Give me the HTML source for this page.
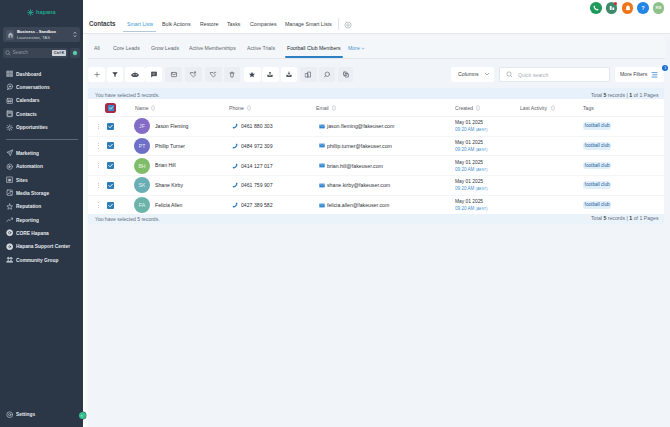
<!DOCTYPE html><html><head><meta charset="utf-8"><style>
*{box-sizing:border-box;margin:0;padding:0}
html,body{width:670px;height:427px;overflow:hidden;background:#f1f5fa;font-family:"Liberation Sans",sans-serif;position:relative}
.a{position:absolute;white-space:nowrap}
.t{position:absolute;white-space:nowrap;font-size:5.2px;line-height:6px;color:#3b3f44;transform:scaleX(0.85);transform-origin:0 50%}
.nav{position:absolute;left:16.2px;color:#e6e9ee;font-size:5.5px;font-weight:bold;white-space:nowrap;line-height:6px;transform:scaleX(0.88);transform-origin:0 0}
.ni{position:absolute;left:5.5px}
.btn{position:absolute;top:66.8px;height:14.8px;border-radius:2.5px;background:#fff;box-shadow:0 0 1px rgba(0,0,0,0.03)}
.btn.g{background:#ebeff3}
.btn svg{position:absolute;left:50%;top:50%;transform:translate(-50%,-42%)}
.cb{position:absolute;width:7px;height:7px;border-radius:1px;background:#2c7db6}
.cb svg{position:absolute;left:0;top:0}
.av{position:absolute;width:16px;height:16px;border-radius:50%;color:#fff;font-size:5.2px;text-align:center;line-height:16.4px;color:rgba(255,255,255,0.85)}
.pill{position:absolute;left:583.3px;width:27.6px;height:7.7px;border-radius:3px;background:#e1effb;color:#235c98;font-size:4.7px;line-height:7.7px;text-align:center}
</style></head><body>
<div class="a" style="left:0;top:0;width:83px;height:427px;background:#2b3646"></div>
<svg class="a" style="left:27.4px;top:9.3px" width="7" height="7" viewBox="0 0 7 7"><g stroke="#1fa68c" stroke-width="0.8" stroke-linecap="round"><line x1="3.5" y1="0.6" x2="3.5" y2="6.4"/><line x1="0.6" y1="3.5" x2="6.4" y2="3.5"/><line x1="1.4" y1="1.4" x2="5.6" y2="5.6"/><line x1="5.6" y1="1.4" x2="1.4" y2="5.6"/></g></svg>
<div class="a" style="left:36px;top:9.2px;font-size:5.6px;line-height:7px;color:#1fa68c;font-weight:bold">hapana</div>
<div class="a" style="left:2.8px;top:27px;width:77.4px;height:15px;background:#3c4656;border-radius:2.5px"></div>
<div class="a" style="left:6.2px;top:29.7px;width:8px;height:10.8px;background:#4a5464;border-radius:1.5px"></div>
<svg class="a" style="left:7.6px;top:31.6px" width="5.2" height="6" viewBox="0 0 5.2 6"><path d="M0.4 5.8 V2.2 L2.6 0.4 L4.8 2.2 V5.8 Z" fill="#a9b0ba"/><rect x="1.9" y="3.6" width="1.4" height="2.2" fill="#4a5464"/></svg>
<div class="a" style="left:16.9px;top:28.9px;font-size:4.1px;line-height:6px;color:#fff;font-weight:bold">Business - Sandbox</div>
<div class="a" style="left:16.9px;top:35.1px;font-size:4.4px;line-height:6px;color:#c3c9d1">Launceston, TAS</div>
<svg class="a" style="left:72.8px;top:30.6px" width="4" height="7" viewBox="0 0 4 7"><path d="M0.8 2.6 L2 1.2 L3.2 2.6 M0.8 4.4 L2 5.8 L3.2 4.4" fill="none" stroke="#c8ced6" stroke-width="0.8"/></svg>
<div class="a" style="left:2.8px;top:47.7px;width:64.9px;height:10.6px;background:#3a4453;border-radius:2px"></div>
<svg class="a" style="left:5.4px;top:50px" width="6" height="6" viewBox="0 0 6 6"><circle cx="2.5" cy="2.5" r="1.8" fill="none" stroke="#8d96a2" stroke-width="0.7"/><line x1="3.8" y1="3.8" x2="5.3" y2="5.3" stroke="#8d96a2" stroke-width="0.7"/></svg>
<div class="a" style="left:12.5px;top:49.8px;font-size:4.9px;line-height:6px;color:#8d96a2">Search</div>
<div class="a" style="left:52.3px;top:50.4px;width:13.6px;height:5.4px;background:#cfd4da;border-radius:0.8px"></div>
<div class="a" style="left:52.3px;top:50.4px;width:13.6px;height:5.4px;font-size:4px;line-height:5.6px;color:#2b3646;text-align:center;font-weight:bold;letter-spacing:-0.05px">Ctrl K</div>
<div class="a" style="left:69.5px;top:47.7px;width:10.7px;height:10.6px;background:#3a4453;border-radius:2px"></div>
<div class="a" style="left:72.9px;top:50.5px;width:4.6px;height:4.6px;border-radius:50%;background:#5fcdb0;box-shadow:0 0 1.5px #3aa88a"></div>
<div class="nav" style="top:70.6px">Dashboard</div>
<svg class="a" style="left:5.6px;top:70.0px" width="7.4" height="7.4" viewBox="0 0 7.4 7.4"><g fill="none" stroke="#b9c0c9" stroke-width="0.7" stroke-linecap="round" stroke-linejoin="round"><rect x="0.8" y="1" width="6" height="5.6" fill="#8e97a3" stroke="#8e97a3"/><path d="M3.8 1.6 V6 M1.4 3.6 H6.2" stroke="#5d6673" stroke-width="0.5"/></g></svg>
<div class="nav" style="top:84.0px">Conversations</div>
<svg class="a" style="left:5.6px;top:83.4px" width="7.4" height="7.4" viewBox="0 0 7.4 7.4"><g fill="none" stroke="#b9c0c9" stroke-width="0.7" stroke-linecap="round" stroke-linejoin="round"><circle cx="4" cy="3.5" r="2.6"/><path d="M2.2 5.4 L1 6.6 L2.8 6"/><circle cx="4" cy="3.5" r="0.7" fill="#b9c0c9"/></g></svg>
<div class="nav" style="top:97.4px">Calendars</div>
<svg class="a" style="left:5.6px;top:96.8px" width="7.4" height="7.4" viewBox="0 0 7.4 7.4"><g fill="none" stroke="#b9c0c9" stroke-width="0.7" stroke-linecap="round" stroke-linejoin="round"><rect x="1" y="1.4" width="5.4" height="5.2" rx="0.6"/><path d="M1 3 H6.4"/><rect x="2.2" y="4" width="1" height="1" fill="#b9c0c9"/><rect x="4.2" y="4" width="1" height="1" fill="#b9c0c9"/></g></svg>
<div class="nav" style="top:110.8px">Contacts</div>
<svg class="a" style="left:5.6px;top:110.2px" width="7.4" height="7.4" viewBox="0 0 7.4 7.4"><g fill="none" stroke="#b9c0c9" stroke-width="0.7" stroke-linecap="round" stroke-linejoin="round"><rect x="1" y="0.9" width="5.4" height="5.8" rx="0.6" fill="#7d8692"/><rect x="2.2" y="4" width="3" height="1.6" fill="#2b3646" stroke="none"/></g></svg>
<div class="nav" style="top:124.2px">Opportunities</div>
<svg class="a" style="left:5.6px;top:123.6px" width="7.4" height="7.4" viewBox="0 0 7.4 7.4"><g fill="none" stroke="#b9c0c9" stroke-width="0.7" stroke-linecap="round" stroke-linejoin="round"><path d="M3.7 0.8 V2.6 M3.7 4.8 V6.6 M0.8 3.7 H2.6 M4.8 3.7 H6.6 M1.6 1.6 L2.6 2.6 M5.8 1.6 L4.8 2.6 M1.6 5.8 L2.6 4.8 M5.8 5.8 L4.8 4.8"/></g></svg>
<div class="nav" style="top:149.7px">Marketing</div>
<svg class="a" style="left:5.6px;top:149.1px" width="7.4" height="7.4" viewBox="0 0 7.4 7.4"><g fill="none" stroke="#b9c0c9" stroke-width="0.7" stroke-linecap="round" stroke-linejoin="round"><path d="M6.4 1 L0.9 3.3 L3.2 4.2 L4.1 6.5 Z M3.2 4.2 L6.4 1"/></g></svg>
<div class="nav" style="top:163.1px">Automation</div>
<svg class="a" style="left:5.6px;top:162.5px" width="7.4" height="7.4" viewBox="0 0 7.4 7.4"><g fill="none" stroke="#b9c0c9" stroke-width="0.7" stroke-linecap="round" stroke-linejoin="round"><circle cx="3.7" cy="3.7" r="2.7"/><path d="M3.2 2.7 L4.6 3.7 L3.2 4.7 Z" fill="#b9c0c9"/></g></svg>
<div class="nav" style="top:176.5px">Sites</div>
<svg class="a" style="left:5.6px;top:175.9px" width="7.4" height="7.4" viewBox="0 0 7.4 7.4"><g fill="none" stroke="#b9c0c9" stroke-width="0.7" stroke-linecap="round" stroke-linejoin="round"><rect x="1" y="1" width="5.4" height="5.4"/><rect x="2.6" y="3.2" width="2.2" height="1.8" fill="#b9c0c9"/></g></svg>
<div class="nav" style="top:189.9px">Media Storage</div>
<svg class="a" style="left:5.6px;top:189.3px" width="7.4" height="7.4" viewBox="0 0 7.4 7.4"><g fill="none" stroke="#b9c0c9" stroke-width="0.7" stroke-linecap="round" stroke-linejoin="round"><rect x="1" y="1" width="5.4" height="5.4" rx="0.8"/><path d="M1.4 5.6 L3.2 3.8 L6 6.2"/><circle cx="4.7" cy="2.6" r="0.6"/></g></svg>
<div class="nav" style="top:203.3px">Reputation</div>
<svg class="a" style="left:5.6px;top:202.7px" width="7.4" height="7.4" viewBox="0 0 7.4 7.4"><g fill="none" stroke="#b9c0c9" stroke-width="0.7" stroke-linecap="round" stroke-linejoin="round"><path d="M3.7 0.9 L4.5 2.8 L6.5 2.9 L5 4.2 L5.5 6.3 L3.7 5.2 L1.9 6.3 L2.4 4.2 L0.9 2.9 L2.9 2.8 Z"/></g></svg>
<div class="nav" style="top:216.7px">Reporting</div>
<svg class="a" style="left:5.6px;top:216.1px" width="7.4" height="7.4" viewBox="0 0 7.4 7.4"><g fill="none" stroke="#b9c0c9" stroke-width="0.7" stroke-linecap="round" stroke-linejoin="round"><path d="M0.8 5.6 L2.6 3.6 L4 4.6 L6.6 2 M5.2 2 H6.6 V3.4"/></g></svg>
<div class="nav" style="top:230.0px">CORE Hapana</div>
<svg class="a" style="left:5.6px;top:229.4px" width="7.4" height="7.4" viewBox="0 0 7.4 7.4"><g fill="none" stroke="#b9c0c9" stroke-width="0.7" stroke-linecap="round" stroke-linejoin="round"><circle cx="3.7" cy="3.7" r="3" fill="#d7dce2" stroke="#d7dce2"/><circle cx="3.7" cy="3.7" r="1.2" stroke="#2b3646" stroke-width="0.6"/></g></svg>
<div class="nav" style="top:243.3px">Hapana Support Center</div>
<svg class="a" style="left:5.6px;top:242.7px" width="7.4" height="7.4" viewBox="0 0 7.4 7.4"><g fill="none" stroke="#b9c0c9" stroke-width="0.7" stroke-linecap="round" stroke-linejoin="round"><circle cx="3.7" cy="3.7" r="3" fill="#d7dce2" stroke="#d7dce2"/><circle cx="3.7" cy="3.7" r="1" stroke="#2b3646" stroke-width="0.6"/></g></svg>
<div class="nav" style="top:256.7px">Community Group</div>
<svg class="a" style="left:5.6px;top:256.1px" width="7.4" height="7.4" viewBox="0 0 7.4 7.4"><g fill="none" stroke="#b9c0c9" stroke-width="0.7" stroke-linecap="round" stroke-linejoin="round"><circle cx="2.3" cy="2.3" r="1" fill="#b9c0c9"/><circle cx="5.1" cy="2.3" r="1" fill="#b9c0c9"/><path d="M0.7 6 C0.8 4 3.7 4 3.7 6 C3.7 4 6.6 4 6.7 6 Z" fill="#b9c0c9"/></g></svg>
<div class="nav" style="top:411.1px">Settings</div>
<svg class="a" style="left:5.6px;top:410.5px" width="7.4" height="7.4" viewBox="0 0 7.4 7.4"><g fill="none" stroke="#b9c0c9" stroke-width="0.7" stroke-linecap="round" stroke-linejoin="round"><circle cx="3.7" cy="3.7" r="2.9"/><circle cx="3.7" cy="3.7" r="1.1"/></g></svg>
<div class="a" style="left:5.6px;top:139.1px;width:72.3px;height:1.2px;background:#5d6775"></div>
<div class="a" style="z-index:5;left:78.8px;top:411.9px;width:7.2px;height:7.2px;border-radius:50%;background:#34c08c;box-shadow:0 0 0 0.4px #2b3646"></div>
<svg class="a" style="z-index:6;left:80.4px;top:413.5px" width="4" height="4" viewBox="0 0 4 4"><path d="M2.5 0.9 L1.4 2 L2.5 3.1" fill="none" stroke="#e9fff5" stroke-width="0.6"/></svg>
<div class="a" style="left:83px;top:0;width:5px;height:427px;background:linear-gradient(90deg,#fdfefe 0,#fbfdfd 1.5px,#f3f7f8 5px)"></div>
<div class="a" style="left:83px;top:0;width:587px;height:33.8px;background:#fff;border-bottom:0.9px solid #e3e7eb"></div>
<div class="a" style="left:89.3px;top:20px;font-size:7.2px;line-height:8px;font-weight:bold;color:#3a3e44;transform:scaleX(0.86);transform-origin:0 0">Contacts</div>
<div class="t" style="left:126.5px;top:21px;font-size:6.18px;color:#3b9bd6">Smart Lists</div>
<div class="t" style="left:162.2px;top:21px;font-size:6.18px;color:#3b3f44">Bulk Actions</div>
<div class="t" style="left:200px;top:21px;font-size:6.18px;color:#3b3f44">Restore</div>
<div class="t" style="left:227.3px;top:21px;font-size:6.18px;color:#3b3f44">Tasks</div>
<div class="t" style="left:250px;top:21px;font-size:6.18px;color:#3b3f44">Companies</div>
<div class="t" style="left:285.3px;top:21px;font-size:6.18px;color:#3b3f44">Manage Smart Lists</div>
<div class="a" style="left:123.3px;top:30.7px;width:32.7px;height:1px;background:#b3c7d4"></div>
<div class="a" style="left:337.8px;top:18.3px;width:0.7px;height:11.7px;background:#e2e4e7"></div>
<svg class="a" style="left:343.7px;top:20.5px" width="8" height="8" viewBox="0 0 8 8"><path d="M4 0.8 L4.7 1.5 L5.8 1.3 L6.1 2.3 L7.1 2.8 L6.8 3.8 L7.2 4.8 L6.3 5.4 L6.1 6.5 L5 6.5 L4.2 7.2 L3.3 6.6 L2.2 6.8 L1.8 5.8 L0.9 5.2 L1.2 4.2 L0.8 3.2 L1.7 2.6 L1.9 1.5 L3 1.5 Z" fill="none" stroke="#9aa0a6" stroke-width="0.6" stroke-linejoin="round"/><circle cx="4" cy="4" r="1.2" fill="none" stroke="#9aa0a6" stroke-width="0.6"/></svg>
<div class="a" style="left:590.05px;top:2.4px;width:11.5px;height:11.5px;border-radius:50%;background:#1f9a5c"></div>
<div class="a" style="left:605.95px;top:2.4px;width:11.5px;height:11.5px;border-radius:50%;background:#3e8a6c"></div>
<div class="a" style="left:621.75px;top:2.4px;width:11.5px;height:11.5px;border-radius:50%;background:#ee7618"></div>
<div class="a" style="left:637.25px;top:2.4px;width:11.5px;height:11.5px;border-radius:50%;background:#2385e4"></div>
<div class="a" style="left:652.85px;top:2.4px;width:11.5px;height:11.5px;border-radius:50%;background:#8ec089"></div>
<div class="a" style="left:614px;top:2.3px;width:3.2px;height:3.2px;border-radius:50%;background:#d9262c"></div>
<div class="a" style="left:653.6px;top:5.3px;width:10px;font-size:4.3px;line-height:6px;color:#eef6ec;text-align:center;font-weight:bold">RE</div>
<div class="a" style="left:638px;top:5.2px;width:10px;font-size:5px;line-height:6px;color:#fff;text-align:center;font-weight:bold">?</div>
<svg class="a" style="left:592.8px;top:5.2px" width="6" height="6" viewBox="0 0 6 6"><path d="M4.6 0.5 L5.5 1.2 C5.4 3.6 3.6 5.4 1.2 5.5 L0.5 4.6 L1.6 3.8 L2.3 4.2 C3.1 3.7 3.7 3.1 4.2 2.3 L3.8 1.6 Z" fill="#fff" transform="rotate(90 3 3)"/></svg>
<svg class="a" style="left:608.9px;top:5.4px" width="6" height="6" viewBox="0 0 6 6"><path d="M0.8 1 H2.6 V5 H0.8 Z M3.4 2.4 H5.2 V5 H3.4 Z" fill="#fff"/></svg>
<svg class="a" style="left:624.5px;top:4.9px" width="6" height="6.5" viewBox="0 0 6 6.5"><path d="M3 0.6 C4.4 0.6 4.8 1.8 4.8 3 V4.3 L5.5 5 H0.5 L1.2 4.3 V3 C1.2 1.8 1.6 0.6 3 0.6 Z M2.3 5.5 H3.7 C3.6 6.1 2.4 6.1 2.3 5.5 Z" fill="#fff"/></svg>
<div class="a" style="left:87.6px;top:35.8px;width:577px;height:23.4px;background:#f4f7fa;border-bottom:0.7px solid #e3e8ee"></div>
<div class="t" style="left:93.9px;top:45.1px;font-size:6.12px;color:#62686f">All</div>
<div class="t" style="left:113px;top:45.1px;font-size:6.12px;color:#62686f">Core Leads</div>
<div class="t" style="left:150.7px;top:45.1px;font-size:6.12px;color:#62686f">Grow Leads</div>
<div class="t" style="left:188.8px;top:45.1px;font-size:6.12px;color:#62686f">Active Memberships</div>
<div class="t" style="left:247px;top:45.1px;font-size:6.12px;color:#62686f">Active Trials</div>
<div class="t" style="left:286.5px;top:45.1px;font-size:6.12px;color:#25292e">Football Club Members</div>
<div class="t" style="left:348px;top:45.1px;font-size:6.12px;color:#4b93cc">More</div><svg class="a" style="left:360.6px;top:46.6px" width="4" height="3" viewBox="0 0 4 3"><path d="M0.6 0.8 L2 2.2 L3.4 0.8" fill="none" stroke="#4b93cc" stroke-width="0.6"/></svg>
<div class="a" style="left:284.7px;top:56.4px;width:58px;height:1.9px;background:#2f7fc5;border-radius:1px"></div>
<div class="btn" style="left:88px;width:17.3px"><svg width="7" height="7" viewBox="0 0 7 7"><path d="M3.5 0.8 V6.2 M0.8 3.5 H6.2" stroke="#40454c" stroke-width="0.55"/></svg></div>
<div class="btn" style="left:106.7px;width:16.3px"><svg width="7" height="7" viewBox="0 0 7 7"><path d="M0.8 1.2 H6.2 L4.1 3.8 V6 L2.9 5.4 V3.8 Z" fill="#3d4249"/></svg></div>
<div class="btn" style="left:125px;width:19.7px"><svg width="8" height="7" viewBox="0 0 8 7"><rect x="1" y="2" width="6" height="4" rx="1.5" fill="#4a5058"/><rect x="2.3" y="3.2" width="1" height="1" fill="#fff"/><rect x="4.7" y="3.2" width="1" height="1" fill="#fff"/><line x1="4" y1="0.6" x2="4" y2="2" stroke="#4a5058" stroke-width="0.6"/><rect x="0.2" y="3.2" width="0.8" height="1.6" fill="#4a5058"/><rect x="7" y="3.2" width="0.8" height="1.6" fill="#4a5058"/></svg></div>
<div class="btn" style="left:145.4px;width:17px"><svg width="7" height="7" viewBox="0 0 7 7"><path d="M1 0.9 H6 V4.7 H2.3 L1 5.9 Z" fill="#3d4249" stroke="#3d4249" stroke-width="0.6" stroke-linejoin="round"/><line x1="2" y1="2.1" x2="5" y2="2.1" stroke="#fff" stroke-width="0.45"/><line x1="2" y1="3.3" x2="4.2" y2="3.3" stroke="#fff" stroke-width="0.45"/></svg></div>
<div class="btn g" style="left:165px;width:17px"><svg width="7" height="7" viewBox="0 0 7 7"><g fill="none" stroke="#5f656d" stroke-width="0.75" stroke-linecap="round" stroke-linejoin="round"><rect x="0.9" y="1.4" width="5.2" height="4.2" rx="0.7"/><path d="M1.2 2.4 L3.5 3.8 L5.8 2.4"/></g></svg></div>
<div class="btn g" style="left:184.8px;width:17px"><svg width="7" height="7" viewBox="0 0 7 7"><g fill="none" stroke="#666c74" stroke-width="0.7" stroke-linecap="round" stroke-linejoin="round"><path d="M1 1.5 L3.5 1.5 L6 4 L4 6 L1.5 3.5 Z"/><line x1="5.6" y1="0.4" x2="5.6" y2="2.2"/><line x1="4.7" y1="1.3" x2="6.5" y2="1.3"/></g></svg></div>
<div class="btn g" style="left:204.5px;width:17px"><svg width="7" height="7" viewBox="0 0 7 7"><g fill="none" stroke="#666c74" stroke-width="0.7" stroke-linecap="round" stroke-linejoin="round"><path d="M1 1.5 L3.5 1.5 L6 4 L4 6 L1.5 3.5 Z"/><line x1="4.7" y1="1.3" x2="6.5" y2="1.3"/></g></svg></div>
<div class="btn g" style="left:224.2px;width:16.2px"><svg width="7" height="7" viewBox="0 0 7 7"><g fill="none" stroke="#666c74" stroke-width="0.7" stroke-linecap="round" stroke-linejoin="round"><path d="M1.5 2 H5.5 M2.8 2 V1 H4.2 V2 M2 2 L2.4 6 H4.6 L5 2"/></g></svg></div>
<div class="btn" style="left:243.7px;width:17.5px"><svg width="7" height="7" viewBox="0 0 7 7"><path d="M3.5 0.6 L4.4 2.6 L6.5 2.8 L4.9 4.2 L5.4 6.3 L3.5 5.2 L1.6 6.3 L2.1 4.2 L0.5 2.8 L2.6 2.6 Z" fill="#3a4656"/></svg></div>
<div class="btn" style="left:262.2px;width:16.5px"><svg width="7" height="7" viewBox="0 0 7 7"><path d="M0.8 3.6 H2 C2.2 4.6 4.8 4.6 5 3.6 H6.2 V5 C6.2 5.6 5.8 6 5.2 6 H1.8 C1.2 6 0.8 5.6 0.8 5 Z" fill="#50565e"/><path d="M3.5 3.8 V1.2" stroke="#50565e" stroke-width="0.9"/><path d="M2.1 2.3 L3.5 0.6 L4.9 2.3 Z" fill="#50565e"/></svg></div>
<div class="btn" style="left:280.6px;width:16.4px"><svg width="7" height="7" viewBox="0 0 7 7"><path d="M0.8 3.6 H2 C2.2 4.6 4.8 4.6 5 3.6 H6.2 V5 C6.2 5.6 5.8 6 5.2 6 H1.8 C1.2 6 0.8 5.6 0.8 5 Z" fill="#50565e"/><path d="M3.5 0.6 V2.6" stroke="#50565e" stroke-width="0.9"/><path d="M2.1 2.2 L3.5 3.9 L4.9 2.2 Z" fill="#50565e"/></svg></div>
<div class="btn g" style="left:300px;width:16.5px"><svg width="7" height="7" viewBox="0 0 7 7"><g fill="none" stroke="#666c74" stroke-width="0.7" stroke-linecap="round" stroke-linejoin="round"><rect x="1" y="2.5" width="2.5" height="3.5"/><rect x="3.5" y="1" width="2.5" height="5"/></g></svg></div>
<div class="btn g" style="left:318.5px;width:16.5px"><svg width="7" height="7" viewBox="0 0 7 7"><g fill="none" stroke="#666c74" stroke-width="0.7" stroke-linecap="round" stroke-linejoin="round"><circle cx="3.8" cy="3.2" r="2.2"/><path d="M2.2 4.7 L1 6"/></g></svg></div>
<div class="btn g" style="left:338px;width:15.4px"><svg width="7" height="7" viewBox="0 0 7 7"><g fill="none" stroke="#5a6068" stroke-width="0.7" stroke-linecap="round" stroke-linejoin="round"><rect x="1" y="1" width="3.5" height="3.5" rx="0.6"/><rect x="2.5" y="2.5" width="3.5" height="3.5" rx="0.6"/></g></svg></div>
<div class="btn" style="left:450.8px;width:43px"></div>
<div class="t" style="left:457.9px;top:71.3px;font-size:6.12px;color:#3b3f44">Columns</div>
<svg class="a" style="left:483.6px;top:72px" width="6" height="4" viewBox="0 0 6 4"><path d="M1 1 L3 3 L5 1" fill="none" stroke="#6b7178" stroke-width="0.6"/></svg>
<div class="a" style="left:499.3px;top:67.2px;width:110.4px;height:14.7px;background:#fff;border:0.7px solid #e3e8ee;border-radius:2px"></div>
<svg class="a" style="left:506.2px;top:70.8px" width="7" height="7" viewBox="0 0 7 7"><circle cx="3" cy="3" r="2.1" fill="none" stroke="#8d949b" stroke-width="0.6"/><line x1="4.5" y1="4.5" x2="6" y2="6" stroke="#8d949b" stroke-width="0.7"/></svg>
<div class="t" style="left:518px;top:71.5px;font-size:6.12px;color:#a8aeb5">Quick search</div>
<div class="btn" style="left:614.6px;width:49.2px"></div>
<div class="t" style="left:620px;top:71.3px;font-size:6.12px;color:#3b3f44">More Filters</div>
<svg class="a" style="left:651px;top:71.5px" width="7" height="6" viewBox="0 0 7 6"><g stroke="#2e7fc4" stroke-width="0.75"><line x1="0.6" y1="0.6" x2="6.4" y2="0.6"/><line x1="1.4" y1="2.8" x2="6.4" y2="2.8"/><line x1="0.6" y1="5" x2="6.4" y2="5"/></g></svg>
<div class="a" style="left:662.2px;top:65.4px;width:6px;height:6px;border-radius:50%;background:#1c6fd1;color:#fff;font-size:3.6px;line-height:6px;text-align:center">1</div>
<div class="a" style="left:88px;top:88.3px;width:576px;height:135.6px;background:#fff"></div>
<div class="a" style="left:88px;top:88.3px;width:576px;height:11.2px;background:#e7f1fb"></div>
<div class="t" style="left:95.2px;top:92.3px;font-size:5.91px;color:#5f6f80">You have selected 5 records.</div>
<div class="t" style="left:591px;top:92.2px;font-size:6.12px;color:#5f6f80">Total <b style="color:#444">5</b> records | <b style="color:#333">1</b> of 1 Pages</div>
<div class="a" style="left:88px;top:214px;width:576px;height:10px;background:#eaf2fa"></div>
<div class="t" style="left:95.2px;top:215.5px;font-size:5.91px;color:#5f6f80">You have selected 5 records.</div>
<div class="t" style="left:591px;top:215.3px;font-size:6.12px;color:#5f6f80">Total <b style="color:#444">5</b> records | <b style="color:#333">1</b> of 1 Pages</div>
<div class="a" style="left:105.3px;top:103px;width:10.8px;height:10.3px;border-radius:2.8px;background:#a72c46"></div>
<div class="cb" style="left:107.7px;top:105.2px;width:6px;height:6px;background:#3a8cc8"><svg width="6" height="6" viewBox="0 0 6 6"><path d="M1.5 3.1 L2.6 4.1 L4.6 2" fill="none" stroke="#fff" stroke-width="0.8" stroke-linecap="round"/></svg></div>
<div class="t" style="left:134.7px;top:105px;font-size:6.00px;color:#5b6066">Name</div>
<svg class="a" style="left:150.8px;top:105.3px" width="4" height="6" viewBox="0 0 4 6"><rect x="0.6" y="0.6" width="2.8" height="4.8" rx="1.4" fill="none" stroke="#b8bdc3" stroke-width="0.5"/><path d="M1.3 2.4 L2 1.6 L2.7 2.4 M1.3 3.6 L2 4.4 L2.7 3.6" fill="none" stroke="#b8bdc3" stroke-width="0.4"/></svg>
<div class="t" style="left:229.3px;top:105px;font-size:6.00px;color:#5b6066">Phone</div>
<svg class="a" style="left:246.5px;top:105.3px" width="4" height="6" viewBox="0 0 4 6"><rect x="0.6" y="0.6" width="2.8" height="4.8" rx="1.4" fill="none" stroke="#b8bdc3" stroke-width="0.5"/><path d="M1.3 2.4 L2 1.6 L2.7 2.4 M1.3 3.6 L2 4.4 L2.7 3.6" fill="none" stroke="#b8bdc3" stroke-width="0.4"/></svg>
<div class="t" style="left:315.9px;top:105px;font-size:6.00px;color:#5b6066">Email</div>
<svg class="a" style="left:331.5px;top:105.3px" width="4" height="6" viewBox="0 0 4 6"><rect x="0.6" y="0.6" width="2.8" height="4.8" rx="1.4" fill="none" stroke="#b8bdc3" stroke-width="0.5"/><path d="M1.3 2.4 L2 1.6 L2.7 2.4 M1.3 3.6 L2 4.4 L2.7 3.6" fill="none" stroke="#b8bdc3" stroke-width="0.4"/></svg>
<div class="t" style="left:454.5px;top:105px;font-size:6.00px;color:#5b6066">Created</div>
<svg class="a" style="left:475.5px;top:105.3px" width="4" height="6" viewBox="0 0 4 6"><rect x="0.6" y="0.6" width="2.8" height="4.8" rx="1.4" fill="none" stroke="#b8bdc3" stroke-width="0.5"/><path d="M1.3 2.4 L2 1.6 L2.7 2.4 M1.3 3.6 L2 4.4 L2.7 3.6" fill="none" stroke="#b8bdc3" stroke-width="0.4"/></svg>
<div class="t" style="left:519.9px;top:105px;font-size:6.00px;color:#5b6066">Last Activity</div>
<svg class="a" style="left:551px;top:105.3px" width="4" height="6" viewBox="0 0 4 6"><rect x="0.6" y="0.6" width="2.8" height="4.8" rx="1.4" fill="none" stroke="#b8bdc3" stroke-width="0.5"/><path d="M1.3 2.4 L2 1.6 L2.7 2.4 M1.3 3.6 L2 4.4 L2.7 3.6" fill="none" stroke="#b8bdc3" stroke-width="0.4"/></svg>
<div class="t" style="left:582.5px;top:105px;font-size:6.00px;color:#5b6066">Tags</div>
<div class="a" style="left:88px;top:115.8px;width:576px;height:0.5px;background:#f1f3f6"></div>
<div class="a" style="left:97.7px;top:123.50px;width:1px;height:1px;background:#b4b9bf;border-radius:50%"></div>
<div class="a" style="left:97.7px;top:125.70px;width:1px;height:1px;background:#b4b9bf;border-radius:50%"></div>
<div class="a" style="left:97.7px;top:127.90px;width:1px;height:1px;background:#b4b9bf;border-radius:50%"></div>
<div class="cb" style="left:107.2px;top:122.70px"><svg width="7" height="7" viewBox="0 0 7 7"><path d="M1.8 3.6 L3 4.8 L5.3 2.3" fill="none" stroke="#fff" stroke-width="0.9" stroke-linecap="round"/></svg></div>
<div class="av" style="left:134px;top:118.20px;background:#846cc6">JF</div>
<div class="t" style="left:154.9px;top:122.80px;font-size:6.06px;color:#2a2e33">Jason Fleming</div>
<svg class="a" style="left:232.3px;top:123.20px" width="6" height="6" viewBox="0 0 6 6"><path d="M4.6 0.5 L5.5 1.2 C5.4 3.6 3.6 5.4 1.2 5.5 L0.5 4.6 L1.6 3.8 L2.3 4.2 C3.1 3.7 3.7 3.1 4.2 2.3 L3.8 1.6 Z" fill="#2b7cc3"/></svg>
<div class="t" style="left:240.6px;top:123.20px;font-size:6.09px;color:#2f3338">0461 880 303</div>
<svg class="a" style="left:318.6px;top:123.70px" width="6" height="5" viewBox="0 0 6 5"><rect x="0.3" y="0.6" width="5.4" height="3.8" fill="#2f86d0"/><path d="M0.5 0.9 L3 2.6 L5.5 0.9" fill="none" stroke="#cfe3f5" stroke-width="0.4"/></svg>
<div class="t" style="left:326.8px;top:123.20px;font-size:6.16px;color:#2f3338">jason.fleming@fakeuser.com</div>
<div class="t" style="left:454.5px;top:119.10px;font-size:5.71px;color:#2f3338">May 01 2025</div>
<div class="t" style="left:455.4px;top:126.10px;font-size:5.41px;color:#3f8fd0">09:20 AM <span style="font-size:4.2px">(AEST)</span></div>
<div class="pill" style="top:122.35px">football club</div>
<div class="a" style="left:88px;top:135.75px;width:576px;height:0.6px;background:#f3f5f7"></div>
<div class="a" style="left:97.7px;top:143.20px;width:1px;height:1px;background:#b4b9bf;border-radius:50%"></div>
<div class="a" style="left:97.7px;top:145.40px;width:1px;height:1px;background:#b4b9bf;border-radius:50%"></div>
<div class="a" style="left:97.7px;top:147.60px;width:1px;height:1px;background:#b4b9bf;border-radius:50%"></div>
<div class="cb" style="left:107.2px;top:142.40px"><svg width="7" height="7" viewBox="0 0 7 7"><path d="M1.8 3.6 L3 4.8 L5.3 2.3" fill="none" stroke="#fff" stroke-width="0.9" stroke-linecap="round"/></svg></div>
<div class="av" style="left:134px;top:137.90px;background:#6e6fc7">PT</div>
<div class="t" style="left:154.9px;top:142.50px;font-size:6.06px;color:#2a2e33">Phillip Turner</div>
<svg class="a" style="left:232.3px;top:142.90px" width="6" height="6" viewBox="0 0 6 6"><path d="M4.6 0.5 L5.5 1.2 C5.4 3.6 3.6 5.4 1.2 5.5 L0.5 4.6 L1.6 3.8 L2.3 4.2 C3.1 3.7 3.7 3.1 4.2 2.3 L3.8 1.6 Z" fill="#2b7cc3"/></svg>
<div class="t" style="left:240.6px;top:142.90px;font-size:6.09px;color:#2f3338">0484 972 309</div>
<svg class="a" style="left:318.6px;top:143.40px" width="6" height="5" viewBox="0 0 6 5"><rect x="0.3" y="0.6" width="5.4" height="3.8" fill="#2f86d0"/><path d="M0.5 0.9 L3 2.6 L5.5 0.9" fill="none" stroke="#cfe3f5" stroke-width="0.4"/></svg>
<div class="t" style="left:326.8px;top:142.90px;font-size:6.16px;color:#2f3338">phillip.turner@fakeuser.com</div>
<div class="t" style="left:454.5px;top:138.80px;font-size:5.71px;color:#2f3338">May 01 2025</div>
<div class="t" style="left:455.4px;top:145.80px;font-size:5.41px;color:#3f8fd0">09:20 AM <span style="font-size:4.2px">(AEST)</span></div>
<div class="pill" style="top:142.05px">football club</div>
<div class="a" style="left:88px;top:155.45px;width:576px;height:0.6px;background:#f3f5f7"></div>
<div class="a" style="left:97.7px;top:162.90px;width:1px;height:1px;background:#b4b9bf;border-radius:50%"></div>
<div class="a" style="left:97.7px;top:165.10px;width:1px;height:1px;background:#b4b9bf;border-radius:50%"></div>
<div class="a" style="left:97.7px;top:167.30px;width:1px;height:1px;background:#b4b9bf;border-radius:50%"></div>
<div class="cb" style="left:107.2px;top:162.10px"><svg width="7" height="7" viewBox="0 0 7 7"><path d="M1.8 3.6 L3 4.8 L5.3 2.3" fill="none" stroke="#fff" stroke-width="0.9" stroke-linecap="round"/></svg></div>
<div class="av" style="left:134px;top:157.60px;background:#80bd6b">BH</div>
<div class="t" style="left:154.9px;top:162.20px;font-size:6.06px;color:#2a2e33">Brian Hill</div>
<svg class="a" style="left:232.3px;top:162.60px" width="6" height="6" viewBox="0 0 6 6"><path d="M4.6 0.5 L5.5 1.2 C5.4 3.6 3.6 5.4 1.2 5.5 L0.5 4.6 L1.6 3.8 L2.3 4.2 C3.1 3.7 3.7 3.1 4.2 2.3 L3.8 1.6 Z" fill="#2b7cc3"/></svg>
<div class="t" style="left:240.6px;top:162.60px;font-size:6.09px;color:#2f3338">0414 127 017</div>
<svg class="a" style="left:318.6px;top:163.10px" width="6" height="5" viewBox="0 0 6 5"><rect x="0.3" y="0.6" width="5.4" height="3.8" fill="#2f86d0"/><path d="M0.5 0.9 L3 2.6 L5.5 0.9" fill="none" stroke="#cfe3f5" stroke-width="0.4"/></svg>
<div class="t" style="left:326.8px;top:162.60px;font-size:6.16px;color:#2f3338">brian.hill@fakeuser.com</div>
<div class="t" style="left:454.5px;top:158.50px;font-size:5.71px;color:#2f3338">May 01 2025</div>
<div class="t" style="left:455.4px;top:165.50px;font-size:5.41px;color:#3f8fd0">09:20 AM <span style="font-size:4.2px">(AEST)</span></div>
<div class="pill" style="top:161.75px">football club</div>
<div class="a" style="left:88px;top:175.15px;width:576px;height:0.6px;background:#f3f5f7"></div>
<div class="a" style="left:97.7px;top:182.60px;width:1px;height:1px;background:#b4b9bf;border-radius:50%"></div>
<div class="a" style="left:97.7px;top:184.80px;width:1px;height:1px;background:#b4b9bf;border-radius:50%"></div>
<div class="a" style="left:97.7px;top:187.00px;width:1px;height:1px;background:#b4b9bf;border-radius:50%"></div>
<div class="cb" style="left:107.2px;top:181.80px"><svg width="7" height="7" viewBox="0 0 7 7"><path d="M1.8 3.6 L3 4.8 L5.3 2.3" fill="none" stroke="#fff" stroke-width="0.9" stroke-linecap="round"/></svg></div>
<div class="av" style="left:134px;top:177.30px;background:#69adb5">SK</div>
<div class="t" style="left:154.9px;top:181.90px;font-size:6.06px;color:#2a2e33">Shane Kirby</div>
<svg class="a" style="left:232.3px;top:182.30px" width="6" height="6" viewBox="0 0 6 6"><path d="M4.6 0.5 L5.5 1.2 C5.4 3.6 3.6 5.4 1.2 5.5 L0.5 4.6 L1.6 3.8 L2.3 4.2 C3.1 3.7 3.7 3.1 4.2 2.3 L3.8 1.6 Z" fill="#2b7cc3"/></svg>
<div class="t" style="left:240.6px;top:182.30px;font-size:6.09px;color:#2f3338">0461 759 907</div>
<svg class="a" style="left:318.6px;top:182.80px" width="6" height="5" viewBox="0 0 6 5"><rect x="0.3" y="0.6" width="5.4" height="3.8" fill="#2f86d0"/><path d="M0.5 0.9 L3 2.6 L5.5 0.9" fill="none" stroke="#cfe3f5" stroke-width="0.4"/></svg>
<div class="t" style="left:326.8px;top:182.30px;font-size:6.16px;color:#2f3338">shane.kirby@fakeuser.com</div>
<div class="t" style="left:454.5px;top:178.20px;font-size:5.71px;color:#2f3338">May 01 2025</div>
<div class="t" style="left:455.4px;top:185.20px;font-size:5.41px;color:#3f8fd0">09:20 AM <span style="font-size:4.2px">(AEST)</span></div>
<div class="pill" style="top:181.45px">football club</div>
<div class="a" style="left:88px;top:194.85px;width:576px;height:0.6px;background:#f3f5f7"></div>
<div class="a" style="left:97.7px;top:202.30px;width:1px;height:1px;background:#b4b9bf;border-radius:50%"></div>
<div class="a" style="left:97.7px;top:204.50px;width:1px;height:1px;background:#b4b9bf;border-radius:50%"></div>
<div class="a" style="left:97.7px;top:206.70px;width:1px;height:1px;background:#b4b9bf;border-radius:50%"></div>
<div class="cb" style="left:107.2px;top:201.50px"><svg width="7" height="7" viewBox="0 0 7 7"><path d="M1.8 3.6 L3 4.8 L5.3 2.3" fill="none" stroke="#fff" stroke-width="0.9" stroke-linecap="round"/></svg></div>
<div class="av" style="left:134px;top:197.00px;background:#6cb4aa">FA</div>
<div class="t" style="left:154.9px;top:201.60px;font-size:6.06px;color:#2a2e33">Felicia Allen</div>
<svg class="a" style="left:232.3px;top:202.00px" width="6" height="6" viewBox="0 0 6 6"><path d="M4.6 0.5 L5.5 1.2 C5.4 3.6 3.6 5.4 1.2 5.5 L0.5 4.6 L1.6 3.8 L2.3 4.2 C3.1 3.7 3.7 3.1 4.2 2.3 L3.8 1.6 Z" fill="#2b7cc3"/></svg>
<div class="t" style="left:240.6px;top:202.00px;font-size:6.09px;color:#2f3338">0427 389 582</div>
<svg class="a" style="left:318.6px;top:202.50px" width="6" height="5" viewBox="0 0 6 5"><rect x="0.3" y="0.6" width="5.4" height="3.8" fill="#2f86d0"/><path d="M0.5 0.9 L3 2.6 L5.5 0.9" fill="none" stroke="#cfe3f5" stroke-width="0.4"/></svg>
<div class="t" style="left:326.8px;top:202.00px;font-size:6.16px;color:#2f3338">felicia.allen@fakeuser.com</div>
<div class="t" style="left:454.5px;top:197.90px;font-size:5.71px;color:#2f3338">May 01 2025</div>
<div class="t" style="left:455.4px;top:204.90px;font-size:5.41px;color:#3f8fd0">09:20 AM <span style="font-size:4.2px">(AEST)</span></div>
<div class="pill" style="top:201.15px">football club</div>
</body></html>
